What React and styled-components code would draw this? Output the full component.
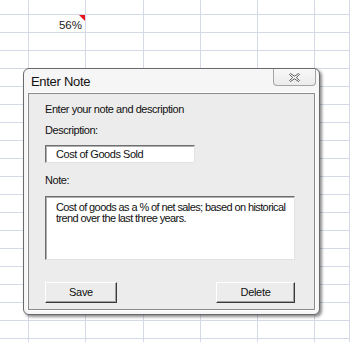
import styled, { createGlobalStyle } from 'styled-components'

const GlobalStyle = createGlobalStyle`
    html, body {
        margin: 0;
        padding: 0;
        background: #ffffff;
        overflow: hidden;
    }
    body {
        font-family: Tahoma, "Liberation Sans", Arial, sans-serif;
        color: #111111;
    }
`

const columnWidths = [29, 57, 58, 57, 57, 57, 35]
const rowCount = 20

export default function App(){
    const cells = []
    for(let r = 0; r < rowCount; r++){
        for(let c = 0; c < columnWidths.length; c++){
            const isValue = r === 1 && c === 1
            cells.push(
                <Cell key={`${r}-${c}`}>
                    {isValue && '56%'}
                    {isValue && <CommentFlag />}
                </Cell>
            )
        }
    }

    return(
        <Screen>
            <GlobalStyle />
            <Sheet>{cells}</Sheet>
            <Dialog>
                <TitleBar>
                    <Title>Enter Note</Title>
                    <CloseButton>
                        <svg width="11" height="9" viewBox="0 0 11 9">
                            <path d="M1.5 0.5 L5.5 3.2 L9.5 0.5 L10.5 1.5 L7.3 4.5 L10.5 7.5 L9.5 8.5 L5.5 5.8 L1.5 8.5 L0.5 7.5 L3.7 4.5 L0.5 1.5 Z" fill="#f4f4f4" stroke="#5e5e5e" strokeWidth="1" strokeLinejoin="round" />
                        </svg>
                    </CloseButton>
                </TitleBar>
                <Panel>
                    <Label top={9}>Enter your note and description</Label>
                    <Label top={8}>Description:</Label>
                    <TextInput>Cost of Goods Sold</TextInput>
                    <Label top={11}>Note:</Label>
                    <TextArea>Cost of goods as a % of net sales; based on historical trend over the last three years.</TextArea>
                    <ButtonRow>
                        <Button width={72}>Save</Button>
                        <Button width={79}>Delete</Button>
                    </ButtonRow>
                </Panel>
            </Dialog>
        </Screen>
    )
}

const Screen = styled.div`
    position: relative;
    width: 350px;
    height: 342px;
    overflow: hidden;
`

const Sheet = styled.div`
    display: grid;
    grid-template-columns: ${columnWidths.map(w => `${w}px`).join(' ')};
    grid-template-rows: 15px;
    grid-auto-rows: 18px;
`

const Cell = styled.div`
    position: relative;
    box-sizing: border-box;
    border-right: 1px solid #d4d9e7;
    border-bottom: 1px solid #d4d9e7;
    font-family: "Liberation Sans", Arial, sans-serif;
    font-size: 11.5px;
    color: #222222;
    text-align: right;
    padding: 3px 3px 0 0;
    line-height: 14px;
`

const CommentFlag = styled.span`
    position: absolute;
    top: 0;
    right: 0;
    width: 0;
    height: 0;
    border-top: 6px solid #e8141c;
    border-left: 6px solid transparent;
`

const Dialog = styled.div`
    position: absolute;
    left: 23px;
    top: 68px;
    width: 297px;
    height: 247px;
    box-sizing: border-box;
    border: 1px solid #6a6a6a;
    border-radius: 6px;
    background: #f6f6f6;
    box-shadow: 2px 2px 3px rgba(0, 0, 0, 0.45);
    display: flex;
    flex-direction: column;
`

const TitleBar = styled.div`
    height: 24px;
    display: flex;
    align-items: flex-start;
    justify-content: space-between;
    padding: 0 3px 0 7px;
`

const Title = styled.div`
    font-size: 13px;
    line-height: 14px;
    letter-spacing: -0.3px;
    margin-top: 6px;
    color: #111111;
`

const CloseButton = styled.div`
    width: 43px;
    height: 17px;
    box-sizing: border-box;
    border: 1px solid #a4a4a4;
    border-top: none;
    border-radius: 0 0 4px 4px;
    background: linear-gradient(#f8f8f8, #ebebeb);
    display: flex;
    align-items: center;
    justify-content: center;
`

const Panel = styled.div`
    flex: 1;
    margin: 0 4px 4px 4px;
    border: 1px solid #8a8a8a;
    box-shadow: 0 0 0 1px #ffffff;
    background: #ececec;
    padding: 0 17px 0 16px;
    display: flex;
    flex-direction: column;
    align-items: flex-start;
`

const Label = styled.div`
    font-size: 11px;
    line-height: 13px;
    margin-top: ${props => props.top}px;
    letter-spacing: -0.45px;
`

const Sunken = styled.div`
    box-sizing: border-box;
    background: #ffffff;
    border: 1px solid;
    border-color: #6e6e6e #e2e2e2 #e2e2e2 #6e6e6e;
    box-shadow: inset 1px 1px 0 #b0b0b0;
    font-size: 11px;
    letter-spacing: -0.45px;
    color: #111111;
`

const TextInput = styled(Sunken)`
    margin-top: 8px;
    width: 150px;
    height: 18px;
    line-height: 16px;
    padding-left: 10px;
`

const TextArea = styled(Sunken)`
    margin-top: 9px;
    width: 250px;
    height: 64px;
    line-height: 11px;
    letter-spacing: -0.6px;
    padding: 5px 2px 0 10px;
`

const ButtonRow = styled.div`
    margin-top: 22px;
    width: 250px;
    display: flex;
    justify-content: space-between;
`

const Button = styled.div`
    width: ${props => props.width}px;
    height: 21px;
    box-sizing: border-box;
    border: 1px solid;
    border-color: #ffffff #3a3a3a #3a3a3a #ffffff;
    box-shadow: inset -1px -1px 0 #a0a0a0;
    background: #ececec;
    font-size: 11px;
    letter-spacing: -0.3px;
    line-height: 19px;
    text-align: center;
    color: #111111;
`
